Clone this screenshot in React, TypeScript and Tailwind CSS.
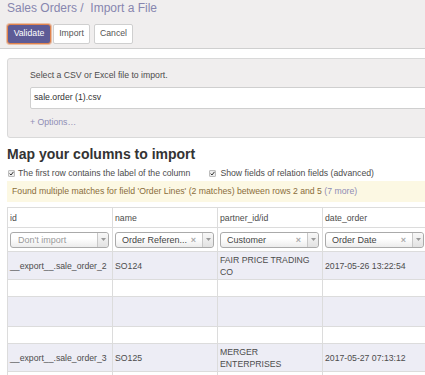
import React from "react";

const Arrow = () => (
  <svg width="5" height="3" viewBox="0 0 5 3">
    <path d="M0 0 L5 0 L2.5 3 Z" fill="#999" />
  </svg>
);

const Select = ({ text, placeholder, clear }: { text: string; placeholder?: boolean; clear?: boolean }) => (
  <div className="flex h-[16px] items-stretch rounded-[3px] border border-[#aaa] bg-gradient-to-b from-white from-40% to-[#ececec]">
    <div
      className={
        placeholder
          ? "flex-1 overflow-hidden whitespace-nowrap pl-[7px] text-[9px] leading-[14px] text-[#9a9a9a]"
          : "flex-1 overflow-hidden whitespace-nowrap pl-[6px] text-[9px] leading-[14px] text-[#444]"
      }
    >
      {text}
    </div>
    {clear && <span className="pr-[6px] text-[9px] font-bold leading-[15px] text-[#aaa]">×</span>}
    <div className="flex w-[11px] items-center justify-center rounded-r-[3px] border-l border-[#c8c8c8] bg-gradient-to-b from-[#f8f8f8] to-[#e2e2e2]">
      <Arrow />
    </div>
  </div>
);

const Check = () => (
  <span className="inline-flex h-[7px] w-[7px] items-center justify-center rounded-[1px] border border-[#bdbdbd] bg-[#ececec]">
    <svg width="5" height="5" viewBox="0 0 5 5">
      <path d="M0.6 2.6 L2 4 L4.5 0.8" stroke="#333" strokeWidth="1" fill="none" />
    </svg>
  </span>
);

const Cell = ({ children, className = "" }: { children?: React.ReactNode; className?: string }) => (
  <div className={"flex w-[105px] shrink-0 items-center border-r border-[#dcdcdc] pl-[2px] pr-[3px] " + className}>{children}</div>
);

type Row = { h: string; bg: string; cells: React.ReactNode[] };

export default function App() {
  const rows: Row[] = [
    {
      h: "h-[28px]",
      bg: "bg-[#ededf5]",
      cells: ["__export__.sale_order_2", "SO124", <>FAIR PRICE TRADING<br />CO</>, "2017-05-26 13:22:54"],
    },
    { h: "h-[17px]", bg: "bg-white", cells: ["", "", "", ""] },
    { h: "h-[30px]", bg: "bg-[#ededf5]", cells: ["", "", "", ""] },
    { h: "h-[17px]", bg: "bg-white", cells: ["", "", "", ""] },
    {
      h: "h-[28px]",
      bg: "bg-[#ededf5]",
      cells: ["__export__.sale_order_3", "SO125", <>MERGER<br />ENTERPRISES</>, "2017-05-27 07:13:12"],
    },
    { h: "h-[20px]", bg: "bg-white", cells: ["", "", "", ""] },
  ];

  return (
    <div className="h-[375px] w-[425px] overflow-hidden bg-white font-['Liberation_Sans',Arial,sans-serif] text-[8.7px] text-[#4c4c4c]">
      {/* control panel */}
      <div className="h-[49px] border-b border-[#cfcfcf] bg-[#f0eeee] px-[7px]">
        <div className="h-[16px] whitespace-nowrap text-[12px] leading-[16px] text-[#8786ae]">
          Sales Orders /&nbsp; Import a File
        </div>
        <div className="mt-[8px] flex items-center">
          <button className="h-[20px] w-[44px] rounded-[3px] border border-[#e0834c] bg-[#5d5b96] text-[8.7px] text-white shadow-[0_0_0_1px_rgba(224,131,76,0.45)]">
            Validate
          </button>
          <button className="ml-[2px] h-[20px] w-[37px] rounded-[2px] border border-[#cfcfcf] bg-white text-[8.7px] text-[#555]">
            Import
          </button>
          <button className="ml-[4px] h-[20px] w-[39px] rounded-[2px] border border-[#cfcfcf] bg-white text-[8.7px] text-[#555]">
            Cancel
          </button>
        </div>
      </div>

      <div className="pl-[7px]">
        {/* file panel */}
        <div className="mt-[9px] h-[80px] w-[440px] rounded-[3px] border border-[#d9d9d9] bg-[#f0eeee] pl-[22px] pt-[10px]">
          <div className="h-[12px] leading-[12px] text-[#4c4c4c]">Select a CSV or Excel file to import.</div>
          <div className="mt-[6px] flex h-[22px] items-center rounded-[2px] border border-[#cfcfcf] bg-white pl-[3px] text-[#333]">
            sale.order (1).csv
          </div>
          <div className="mt-[7px] h-[12px] leading-[12px] text-[#8f8db5]">+ Options…</div>
        </div>

        {/* heading */}
        <div className="mt-[8px] h-[16px] text-[14px] font-bold leading-[16px] text-[#333]">Map your columns to import</div>

        <div className="mt-[5px] flex h-[12px] items-center whitespace-nowrap leading-[12px]">
          <span className="ml-[1px] flex items-center">
            <Check />
          </span>
          <span className="ml-[3px]">The first row contains the label of the column</span>
          <span className="ml-[19px] flex items-center">
            <Check />
          </span>
          <span className="ml-[4px]">Show fields of relation fields (advanced)</span>
        </div>

        <div className="mt-[2px] flex h-[21px] w-[430px] items-center whitespace-nowrap bg-[#fcf8e3] pl-[5px] text-[#8a6d3b]">
          Found multiple matches for field 'Order Lines' (2 matches) between rows 2 and 5&nbsp;
          <span className="text-[#8f8db5]">(7 more)</span>
        </div>

        {/* table */}
        <div className="mt-[5px] w-[421px] border-l border-t border-[#dcdcdc]">
          <div className="flex h-[20px] border-b border-[#dcdcdc] leading-[12px]">
            <Cell>id</Cell>
            <Cell>name</Cell>
            <Cell>partner_id/id</Cell>
            <Cell>date_order</Cell>
          </div>
          <div className="flex h-[24px] border-b border-[#dcdcdc]">
            <Cell>
              <div className="w-full"><Select text="Don't import" placeholder /></div>
            </Cell>
            <Cell>
              <div className="w-full"><Select text="Order Referen..." clear /></div>
            </Cell>
            <Cell>
              <div className="w-full"><Select text="Customer" clear /></div>
            </Cell>
            <Cell>
              <div className="w-full"><Select text="Order Date" clear /></div>
            </Cell>
          </div>
          {rows.map((r, i) => (
            <div key={i} className={"flex border-b border-[#dcdcdc] leading-[12px] " + r.h + " " + r.bg}>
              {r.cells.map((c, j) => (
                <Cell key={j}>
                  <div className="whitespace-nowrap">{c}</div>
                </Cell>
              ))}
            </div>
          ))}
        </div>
      </div>
    </div>
  );
}
